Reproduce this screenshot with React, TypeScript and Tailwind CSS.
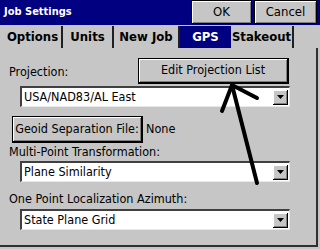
const font = "font-['DejaVu_Sans_Condensed','DejaVu_Sans',sans-serif]";

function RaisedButton(props: { className?: string; children: React.ReactNode }) {
    return (
        <div
            className={`flex items-center justify-center whitespace-nowrap bg-[#c6c6c6] border border-black shadow-[inset_1px_1px_0_#ffffff,inset_-1px_-1px_0_#808080] text-black ${props.className ?? ""}`}
        >
            {props.children}
        </div>
    );
}

function Dropdown(props: { value: string; className?: string }) {
    return (
        <div
            className={`ml-[20px] w-[270px] h-[21px] bg-white border-t-2 border-l-2 border-[#404040] border-r border-b border-r-[#e8e8e8] border-b-[#e8e8e8] flex items-center justify-between ${props.className ?? ""}`}
        >
            <span className="pl-[2px] text-[12.5px] leading-none text-black whitespace-nowrap">{props.value}</span>
            <div className="mr-[1px] w-[15px] h-[15px] bg-[#c6c6c6] border-r border-b border-black shadow-[inset_1px_1px_0_#ffffff,inset_-1px_-1px_0_#808080] flex items-center justify-center">
                <svg width="7" height="4" viewBox="0 0 7 4">
                    <path d="M0 0 H7 L3.5 4 Z" fill="#000" />
                </svg>
            </div>
        </div>
    );
}

export default function App() {
    const tabs = ["Options", "Units", "New Job", "GPS", "Stakeout"];
    const widths: Record<string, string> = {
        Options: "w-[59px]",
        Units: "w-[51px]",
        "New Job": "w-[66px]",
        GPS: "w-[51px]",
        Stakeout: "w-[63px]",
    };

    return (
        <div className={`relative w-[320px] h-[249px] overflow-hidden bg-[#c6c6c6] ${font}`}>
            {/* title bar */}
            <div className="h-[25px] bg-[#000080] flex items-center justify-between">
                <span className="pl-[4px] text-[11px] font-bold text-white">Job Settings</span>
                <div className="flex gap-[2px] pr-[3px] self-start">
                    <RaisedButton className="w-[61px] h-[24px] text-[13px]">OK</RaisedButton>
                    <RaisedButton className="w-[63px] h-[24px] text-[13px]">Cancel</RaisedButton>
                </div>
            </div>

            {/* tabs */}
            <div className="h-[23px] flex pl-[4px] pt-[1px]">
                {tabs.map((t) => (
                    <div
                        key={t}
                        className={`${widths[t]} h-[22px] flex items-center justify-center text-[13px] font-bold whitespace-nowrap ${
                            t === "GPS"
                                ? "bg-[#000080] text-white"
                                : "text-black border-r-2 border-[#202020]"
                        }`}
                    >
                        {t}
                    </div>
                ))}
            </div>

            {/* content panel */}
            <div className="h-[199px] mr-[2px] border-r-2 border-b-2 border-[#303030] pt-[10px] text-[12.5px] text-black whitespace-nowrap">
                <div className="flex items-end justify-between pl-[9px] pr-[27px]">
                    <span className="leading-[16px] mb-[4px]">Projection:</span>
                    <RaisedButton className="w-[151px] h-[26px] border-b-2 border-r-2">Edit Projection List</RaisedButton>
                </div>
                <Dropdown value="USA/NAD83/AL East" className="mt-[2px]" />

                <div className="flex items-center mt-[9px] pl-[12px]">
                    <RaisedButton className="w-[131px] h-[27px] border-b-2 border-r-2">Geoid Separation File:</RaisedButton>
                    <span className="ml-[3px]">None</span>
                </div>

                <div className="pl-[9px] leading-[16px] mt-[1px]">Multi-Point Transformation:</div>
                <Dropdown value="Plane Similarity" className="mt-[1px]" />

                <div className="pl-[9px] leading-[16px] mt-[9px]">One Point Localization Azimuth:</div>
                <Dropdown value="State Plane Grid" className="mt-[2px]" />
            </div>

            {/* annotation arrow drawn over the dialog */}
            <svg className="absolute left-0 top-0 pointer-events-none" width="320" height="249">
                <g stroke="#000" strokeWidth="4" strokeLinecap="round" fill="none">
                    <line x1="257" y1="183" x2="232" y2="85" />
                    <polyline points="222,111 232,85 257,98" strokeLinejoin="miter" />
                </g>
            </svg>
        </div>
    );
}
